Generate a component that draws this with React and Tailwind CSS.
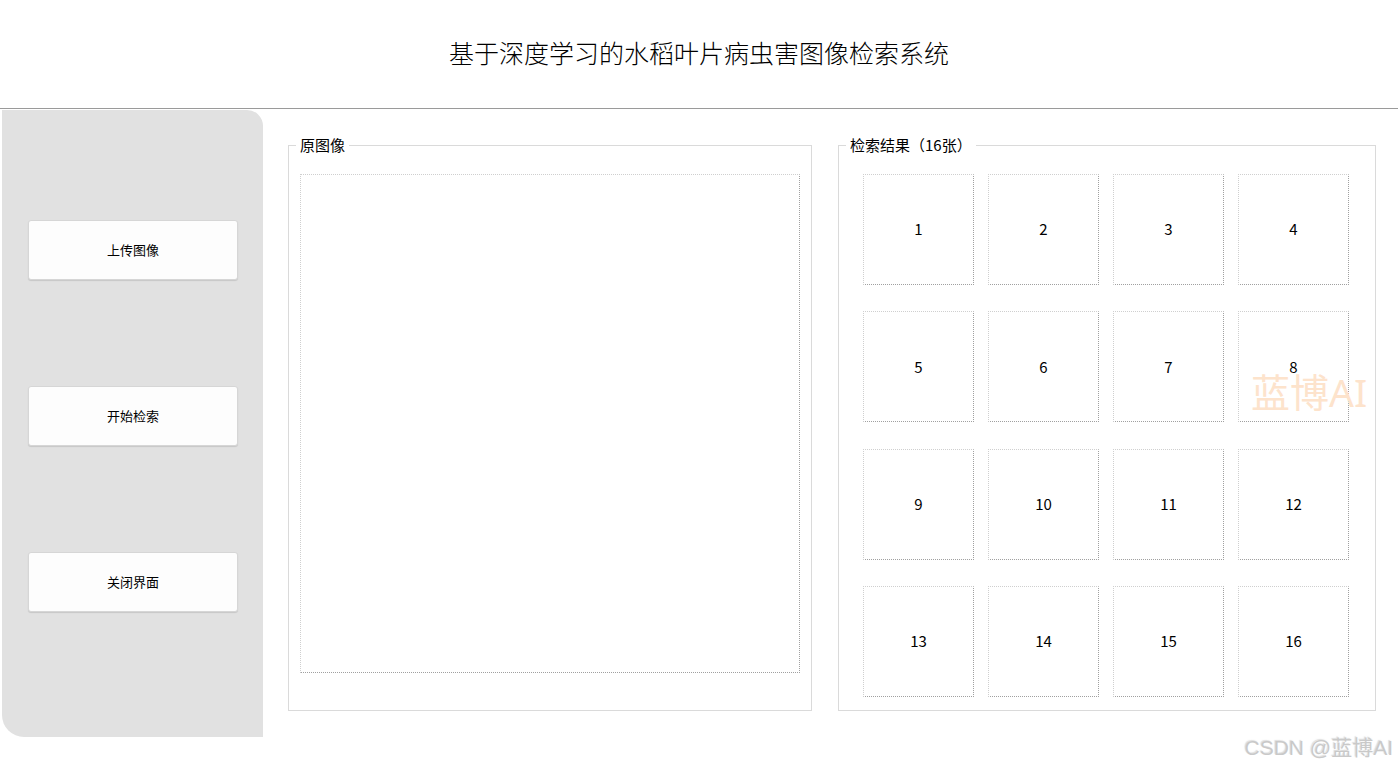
import React from "react";

const cells = Array.from({ length: 16 }, (_, i) => i + 1);

const SideButton = ({ label }) => (
    <button className="w-[210px] h-[60px] bg-[#fdfdfd] border border-[#d6d6d6] rounded-[3px] shadow-[0_1px_1px_rgba(0,0,0,0.12)] text-[13px] text-black cursor-pointer">
        {label}
    </button>
);

const GroupBox = ({ title, className, children }) => (
    <div className={"relative border border-[#dadada] " + className}>
        <span className="absolute left-[7px] top-[-11px] px-[4px] bg-white text-[15px] leading-[20px] text-black">
            {title}
        </span>
        {children}
    </div>
);

const App = () => {
    return (
        <div className="relative w-full h-[773px] bg-white overflow-hidden font-['Noto_Sans_CJK_SC','Noto_Sans',sans-serif]">

            <div className="h-[109px] flex items-center justify-center border-b border-[#9a9a9a]">
                <h1 className="text-[25px] font-light text-black mt-[-2px]">基于深度学习的水稻叶片病虫害图像检索系统</h1>
            </div>

            <div className="flex items-start">

                <div className="ml-[2px] mt-[1px] w-[261px] h-[627px] bg-[#e1e1e1] rounded-tr-[16px] rounded-bl-[22px] flex flex-col pt-[110px] pl-[26px] gap-[106px]">
                    <SideButton label="上传图像" />
                    <SideButton label="开始检索" />
                    <SideButton label="关闭界面" />
                </div>

                <div className="ml-[25px] mt-[36px] flex gap-[26px]">

                    <GroupBox title="原图像" className="w-[524px] h-[566px]">
                        <div className="ml-[11px] mt-[28px] w-[500px] h-[499px] border border-dotted border-t-[#cfcfcf] border-l-[#cfcfcf] border-r-[#a0a0a0] border-b-[#a0a0a0]" />
                    </GroupBox>

                    <GroupBox title="检索结果（16张）" className="w-[538px] h-[566px]">
                        <div className="ml-[24px] mt-[28px] grid grid-cols-[repeat(4,111px)] auto-rows-[111px] gap-x-[14px] gap-y-[26.4px]">
                            {cells.map((n) => (
                                <div
                                    key={n}
                                    className="flex items-center justify-center border border-dotted border-t-[#cfcfcf] border-l-[#cfcfcf] border-r-[#a0a0a0] border-b-[#a0a0a0] text-[15px] text-black"
                                >
                                    {n}
                                </div>
                            ))}
                        </div>
                    </GroupBox>
                </div>
            </div>

            <div className="absolute left-[1251px] top-[367px] text-[39px] leading-[50px] text-[#fde3cc] font-['Noto_Sans','Noto_Sans_CJK_SC',sans-serif] pointer-events-none">
                蓝博AI
            </div>

            <div className="absolute right-[5px] top-[733px] text-[21px] leading-[30px] text-[#c9c9c9] [text-shadow:1px_1px_1px_rgba(255,255,255,0.9),-1px_-1px_1px_rgba(160,160,160,0.35)] font-['Liberation_Sans','Noto_Sans_CJK_SC',sans-serif] pointer-events-none">
                CSDN @蓝博AI
            </div>
        </div>
    );
};

export default App;
